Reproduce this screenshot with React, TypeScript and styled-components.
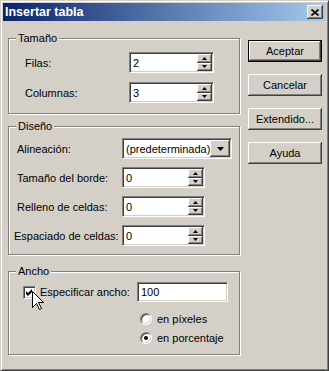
import React from "react"
import styled, { createGlobalStyle } from "styled-components"

const GlobalStyle = createGlobalStyle`
  html, body {
    margin: 0;
    padding: 0;
    background: #d4d0c8;
  }
  body {
    font-family: "Liberation Sans", Arial, sans-serif;
    font-size: 11px;
    color: #000;
  }
`

/**
 * Window frame
 */

const Window = styled.div`
  position: relative;
  width: 329px;
  height: 371px;
  box-sizing: border-box;
  background: #d4d0c8;
  border: 1px solid;
  border-color: #d4d0c8 #404040 #404040 #d4d0c8;
  box-shadow: inset 1px 1px 0 #fff, inset -1px -1px 0 #808080;
  padding: 2px;
`

const TitleBar = styled.div`
  height: 18px;
  display: flex;
  align-items: center;
  justify-content: space-between;
  padding: 0 3px 0 2px;
  background: linear-gradient(to right, #0a246a, #a6caf0);
`

const Title = styled.span`
  color: #fff;
  font-weight: bold;
  font-size: 12.5px;
  line-height: 14px;
`

const CloseButton = styled.div`
  width: 16px;
  height: 14px;
  box-sizing: border-box;
  background: #d4d0c8;
  box-shadow: inset -1px -1px 0 #404040, inset 1px 1px 0 #fff, inset -2px -2px 0 #808080;
  display: flex;
  align-items: center;
  justify-content: center;
`

const Body = styled.div`
  display: flex;
  gap: 8px;
  padding: 11px 0 0 5px;
`

const LeftColumn = styled.div`
  width: 232px;
  display: flex;
  flex-direction: column;
`

const RightColumn = styled.div`
  display: flex;
  flex-direction: column;
  gap: 12px;
  padding-top: 8px;
`

/**
 * Group box
 */

const Group = styled.fieldset<{ $mt?: number }>`
  margin: ${(p) => p.$mt ?? 0}px 0 0 0;
  padding: 0;
  min-width: 0;
  border: 1px solid #808080;
  box-shadow: inset 1px 1px 0 #fff, 1px 1px 0 #fff;
`

const Legend = styled.legend`
  margin-left: 7px;
  padding: 0 2px;
  line-height: 13px;
  background: #d4d0c8;
`

const GroupContent = styled.div<{ $pad: string; $gap: number }>`
  padding: ${(p) => p.$pad};
  display: flex;
  flex-direction: column;
  gap: ${(p) => p.$gap}px;
`

const Row = styled.div<{ $h?: number }>`
  display: flex;
  align-items: center;
  height: ${(p) => p.$h ?? 21}px;
`

const Label = styled.label<{ $w?: number; $shift?: number }>`
  width: ${(p) => (p.$w ? `${p.$w}px` : "auto")};
  margin-left: ${(p) => p.$shift ?? 0}px;
  flex-shrink: 0;
  white-space: nowrap;
`

/**
 * Controls
 */

const Sunken = styled.div<{ $w: number; $h?: number }>`
  width: ${(p) => p.$w}px;
  height: ${(p) => p.$h ?? 21}px;
  box-sizing: border-box;
  background: #fff;
  border: 1px solid;
  border-color: #808080 #fff #fff #808080;
  box-shadow: inset 1px 1px 0 #404040, inset -1px -1px 0 #d4d0c8;
  padding: 1px;
  display: flex;
  align-items: stretch;
`

const Value = styled.span`
  flex: 1;
  padding-left: 2px;
  display: flex;
  align-items: center;
  white-space: nowrap;
`

const SpinColumn = styled.div`
  width: 15px;
  display: flex;
  flex-direction: column;
`

const SmallButton = styled.div<{ $w?: number }>`
  flex: 1;
  width: ${(p) => (p.$w ? `${p.$w}px` : "auto")};
  box-sizing: border-box;
  background: #d4d0c8;
  box-shadow: inset -1px -1px 0 #404040, inset 1px 1px 0 #fff, inset -2px -2px 0 #808080;
  display: flex;
  align-items: center;
  justify-content: center;
`

const PushButton = styled.div<{ $default?: boolean }>`
  width: 74px;
  height: 22px;
  box-sizing: border-box;
  background: #d4d0c8;
  border: ${(p) => (p.$default ? "1px solid #000" : "none")};
  box-shadow: ${(p) =>
    p.$default
      ? "inset -1px -1px 0 #404040, inset 1px 1px 0 #fff, inset -2px -2px 0 #808080"
      : "inset -1px -1px 0 #404040, inset 1px 1px 0 #fff, inset -2px -2px 0 #808080, inset 2px 2px 0 #d4d0c8"};
  display: flex;
  align-items: center;
  justify-content: center;
`

const CheckBox = styled.span`
  width: 13px;
  height: 13px;
  box-sizing: border-box;
  background: #fff;
  border: 1px solid;
  border-color: #808080 #fff #fff #808080;
  box-shadow: inset 1px 1px 0 #404040, inset -1px -1px 0 #d4d0c8;
  display: flex;
  align-items: center;
  justify-content: center;
  flex-shrink: 0;
`

const RadioCircle = styled.span<{ $checked?: boolean }>`
  width: 12px;
  height: 12px;
  box-sizing: border-box;
  border-radius: 50%;
  background: #fff;
  border: 1px solid;
  border-color: #808080 #fff #fff #808080;
  box-shadow: inset 1px 1px 0 #404040, inset -1px -1px 0 #d4d0c8;
  display: flex;
  align-items: center;
  justify-content: center;
  flex-shrink: 0;

  &::after {
    content: "";
    width: 4px;
    height: 4px;
    border-radius: 50%;
    background: ${(p) => (p.$checked ? "#000" : "transparent")};
  }
`

const RadioList = styled.div`
  display: flex;
  flex-direction: column;
  gap: 6px;
  margin: 4px 0 0 117px;
`

const RadioRow = styled.div`
  display: flex;
  align-items: center;
  gap: 5px;
  height: 13px;
`

const Cursor = styled.svg`
  position: absolute;
  left: 31px;
  top: 290px;
`

/**
 * Small glyphs
 */

const UpArrow = () => (
  <svg width="5" height="3" viewBox="0 0 5 3">
    <path d="M2.5 0 L5 3 L0 3 Z" fill="#000" />
  </svg>
)

const DownArrow = ({ w = 5, h = 3 }: { w?: number; h?: number }) => (
  <svg width={w} height={h} viewBox={`0 0 ${w} ${h}`}>
    <path d={`M0 0 L${w} 0 L${w / 2} ${h} Z`} fill="#000" />
  </svg>
)

const Spin: React.FC<{ value: string; w: number }> = ({ value, w }) => (
  <Sunken $w={w}>
    <Value>{value}</Value>
    <SpinColumn>
      <SmallButton>
        <UpArrow />
      </SmallButton>
      <SmallButton>
        <DownArrow />
      </SmallButton>
    </SpinColumn>
  </Sunken>
)

export default function App() {
  return (
    <>
      <GlobalStyle />
      <Window>
        <TitleBar>
          <Title>Insertar tabla</Title>
          <CloseButton>
            <svg width="8" height="7" viewBox="0 0 8 7">
              <path d="M0.5 0.5 L7.5 6.5 M7.5 0.5 L0.5 6.5" stroke="#000" strokeWidth="1.6" />
            </svg>
          </CloseButton>
        </TitleBar>

        <Body>
          <LeftColumn>
            <Group>
              <Legend>Tamaño</Legend>
              <GroupContent $pad="7px 0 10px 16px" $gap={9}>
                <Row>
                  <Label $w={104}>Filas:</Label>
                  <Spin value="2" w={85} />
                </Row>
                <Row>
                  <Label $w={104}>Columnas:</Label>
                  <Spin value="3" w={85} />
                </Row>
              </GroupContent>
            </Group>

            <Group $mt={6}>
              <Legend>Diseño</Legend>
              <GroupContent $pad="5px 0 8px 8px" $gap={8}>
                <Row>
                  <Label $w={105}>Alineación:</Label>
                  <Sunken $w={110}>
                    <Value>(predeterminada)</Value>
                    <SmallButton $w={16}>
                      <DownArrow w={7} h={4} />
                    </SmallButton>
                  </Sunken>
                </Row>
                <Row>
                  <Label $w={105}>Tamaño del borde:</Label>
                  <Spin value="0" w={83} />
                </Row>
                <Row>
                  <Label $w={105}>Relleno de celdas:</Label>
                  <Spin value="0" w={83} />
                </Row>
                <Row>
                  <Label $w={108} $shift={-3}>
                    Espaciado de celdas:
                  </Label>
                  <Spin value="0" w={83} />
                </Row>
              </GroupContent>
            </Group>

            <Group $mt={10}>
              <Legend>Ancho</Legend>
              <GroupContent $pad="4px 0 10px 14px" $gap={6}>
                <Row $h={20}>
                  <CheckBox>
                    <svg width="7" height="7" viewBox="0 0 7 7">
                      <path d="M0 2 L2 4 L6 0 L6 3 L2 7 L0 5 Z" fill="#000" />
                    </svg>
                  </CheckBox>
                  <Label $w={97} $shift={4}>
                    Especificar ancho:
                  </Label>
                  <Sunken $w={91} $h={20}>
                    <Value>100</Value>
                  </Sunken>
                </Row>
                <RadioList>
                  <RadioRow>
                    <RadioCircle />
                    <span>en píxeles</span>
                  </RadioRow>
                  <RadioRow>
                    <RadioCircle $checked />
                    <span>en porcentaje</span>
                  </RadioRow>
                </RadioList>
              </GroupContent>
            </Group>
          </LeftColumn>

          <RightColumn>
            <PushButton $default>Aceptar</PushButton>
            <PushButton>Cancelar</PushButton>
            <PushButton>Extendido...</PushButton>
            <PushButton>Ayuda</PushButton>
          </RightColumn>
        </Body>

        <Cursor width="12" height="19" viewBox="0 0 12 19">
          <path
            d="M0.5 0.5 L0.5 16.5 L4.5 12.5 L7.5 18.5 L9.5 17.5 L6.5 11.5 L11.5 11.5 Z"
            fill="#fff"
            stroke="#000"
            strokeWidth="1"
          />
        </Cursor>
      </Window>
    </>
  )
}
